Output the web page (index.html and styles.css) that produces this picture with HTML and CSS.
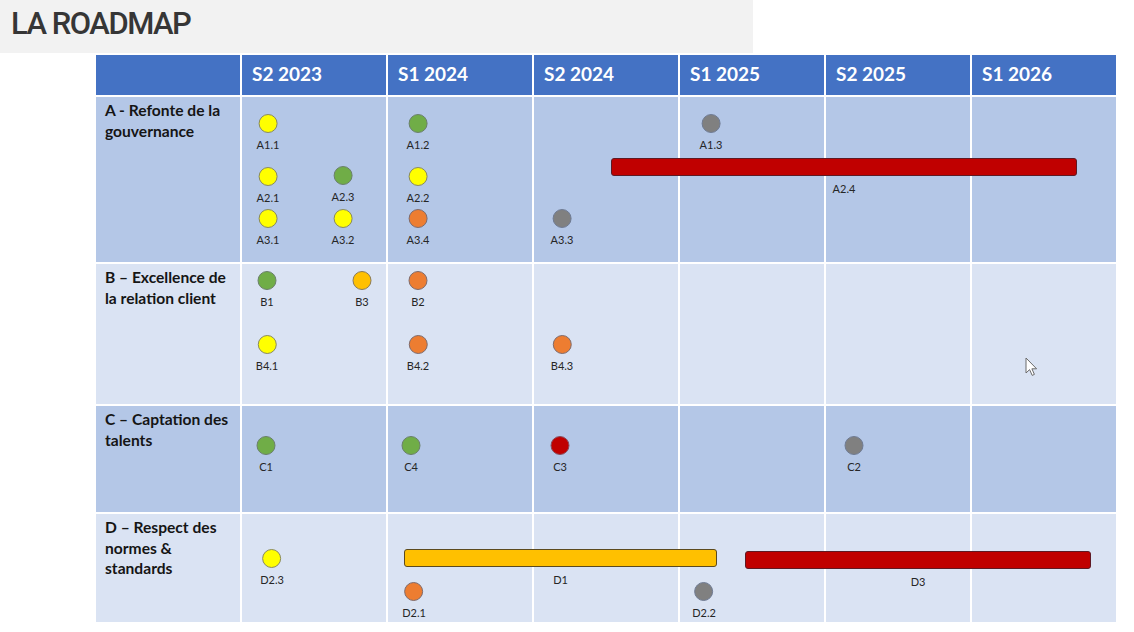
FILE: index.html
```html
<!DOCTYPE html>
<html lang="fr">
<head>
<meta charset="utf-8">
<title>La Roadmap</title>
<link rel="stylesheet" href="styles.css">
</head>
<body>
<header class="titlebar"><h1 class="title">LA ROADMAP</h1></header>

<div class="roadmap">
  <div class="hcell"></div>
  <div class="hcell">S2 2023</div>
  <div class="hcell">S1 2024</div>
  <div class="hcell">S2 2024</div>
  <div class="hcell">S1 2025</div>
  <div class="hcell">S2 2025</div>
  <div class="hcell">S1 2026</div>

  <!-- Row A -->
  <div class="label dark">A - Refonte de la gouvernance</div>
  <div class="track dark">
    <div class="cell"></div><div class="cell"></div><div class="cell"></div><div class="cell"></div><div class="cell"></div><div class="cell"></div>
    <div class="m" style="left:26px;top:27px"><i class="dot y"></i><span>A1.1</span></div>
    <div class="m" style="left:176px;top:27px"><i class="dot g"></i><span>A1.2</span></div>
    <div class="m" style="left:469px;top:27px"><i class="dot gr"></i><span>A1.3</span></div>
    <div class="m" style="left:26px;top:80px"><i class="dot y"></i><span>A2.1</span></div>
    <div class="m" style="left:101px;top:79px"><i class="dot g"></i><span>A2.3</span></div>
    <div class="m" style="left:176px;top:80px"><i class="dot y"></i><span>A2.2</span></div>
    <div class="m" style="left:26px;top:122px"><i class="dot y"></i><span>A3.1</span></div>
    <div class="m" style="left:101px;top:122px"><i class="dot y"></i><span>A3.2</span></div>
    <div class="m" style="left:176px;top:122px"><i class="dot o"></i><span>A3.4</span></div>
    <div class="m" style="left:320px;top:122px"><i class="dot gr"></i><span>A3.3</span></div>
    <div class="bar red" style="left:369px;top:61px;width:466px"><span>A2.4</span></div>
  </div>

  <!-- Row B -->
  <div class="label light">B – Excellence de la relation client</div>
  <div class="track light">
    <div class="cell"></div><div class="cell"></div><div class="cell"></div><div class="cell"></div><div class="cell"></div><div class="cell"></div>
    <div class="m" style="left:25px;top:17px"><i class="dot g"></i><span>B1</span></div>
    <div class="m" style="left:120px;top:17px"><i class="dot am"></i><span>B3</span></div>
    <div class="m" style="left:176px;top:17px"><i class="dot o"></i><span>B2</span></div>
    <div class="m" style="left:25px;top:81px"><i class="dot y"></i><span>B4.1</span></div>
    <div class="m" style="left:176px;top:81px"><i class="dot o"></i><span>B4.2</span></div>
    <div class="m" style="left:320px;top:81px"><i class="dot o"></i><span>B4.3</span></div>
  </div>

  <!-- Row C -->
  <div class="label dark">C – Captation des talents</div>
  <div class="track dark">
    <div class="cell"></div><div class="cell"></div><div class="cell"></div><div class="cell"></div><div class="cell"></div><div class="cell"></div>
    <div class="m" style="left:24px;top:40px"><i class="dot g"></i><span>C1</span></div>
    <div class="m" style="left:169px;top:40px"><i class="dot g"></i><span>C4</span></div>
    <div class="m" style="left:318px;top:40px"><i class="dot r"></i><span>C3</span></div>
    <div class="m" style="left:612px;top:40px"><i class="dot gr"></i><span>C2</span></div>
  </div>

  <!-- Row D -->
  <div class="label light">D – Respect des normes &amp; standards</div>
  <div class="track light">
    <div class="cell"></div><div class="cell"></div><div class="cell"></div><div class="cell"></div><div class="cell"></div><div class="cell"></div>
    <div class="m" style="left:30px;top:45px"><i class="dot y"></i><span>D2.3</span></div>
    <div class="bar amber" style="left:162px;top:35px;width:313px"><span>D1</span></div>
    <div class="bar red" style="left:503px;top:37px;width:346px"><span>D3</span></div>
    <div class="m" style="left:172px;top:78px"><i class="dot o"></i><span>D2.1</span></div>
    <div class="m" style="left:462px;top:78px"><i class="dot gr"></i><span>D2.2</span></div>
  </div>
</div>

<svg class="cursor" width="13" height="20" viewBox="0 0 13 20" aria-hidden="true">
  <path d="M1 1 L1 16 L4.6 12.6 L7.2 18.4 L9.4 17.4 L6.9 11.8 L11.6 11.8 Z" fill="#ffffff" stroke="#6a6a6a" stroke-width="1" stroke-linejoin="round"/>
</svg>
</body>
</html>
```

FILE: styles.css
```css
* { box-sizing: border-box; }

body {
  margin: 0;
  background: #ffffff;
  font-family: Lato, "Open Sans", sans-serif;
  position: relative;
  width: 1134px;
  height: 632px;
  overflow: hidden;
}

.titlebar {
  width: 753px;
  height: 53px;
  background: #f2f2f2;
  padding: 6px 0 0 11px;
}

.title {
  margin: 0;
  font-family: Roboto, "Liberation Sans", sans-serif;
  font-weight: 500;
  font-size: 31px;
  line-height: 36px;
  letter-spacing: -1.5px;
  color: #363636;
}

.roadmap {
  display: grid;
  grid-template-columns: repeat(7, 144px);
  grid-template-rows: 40px 165px 140px 106px 108px;
  gap: 2px;
  width: 1020px;
  margin: 2px 0 0 96px;
  background: #ffffff;
}

.hcell {
  background: #4472c4;
  color: #ffffff;
  font-weight: 700;
  font-size: 19px;
  display: flex;
  align-items: center;
  padding: 0 0 4px 10px;
}

.label {
  font-weight: 700;
  font-size: 15.6px;
  line-height: 20.5px;
  color: #151515;
  padding: 3px 8px 0 9px;
}

.label.dark { background: #b4c7e7; }
.label.light { background: #dae3f3; }

.track {
  grid-column: span 6;
  display: grid;
  grid-template-columns: repeat(6, 144px);
  gap: 2px;
  position: relative;
}

.track.dark .cell { background: #b4c7e7; }
.track.light .cell { background: #dae3f3; }

.m {
  position: absolute;
  transform: translate(-50%, -10px);
  display: flex;
  flex-direction: column;
  align-items: center;
  gap: 5px;
}

.m span,
.bar span {
  font-size: 11px;
  line-height: 13px;
  color: #262626;
  white-space: nowrap;
}

.dot {
  display: block;
  width: 19px;
  height: 19px;
  border-radius: 50%;
  border: 1px solid #7a7a7a;
}

.dot.y { background: #ffff00; border-color: #8a8a5a; }
.dot.g { background: #70ad47; border-color: #6a7f6a; }
.dot.o { background: #ed7d31; border-color: #7f6a6a; }
.dot.gr { background: #808080; border-color: #6f7b93; }
.dot.am { background: #ffc000; border-color: #8a7a55; }
.dot.r { background: #c00000; border-color: #8a4a5a; }

.bar {
  position: absolute;
  height: 18px;
  border-radius: 3px;
}

.bar.red { background: #c00000; border: 1px solid #5e1a24; }
.bar.amber { background: #ffc000; border: 1px solid #5c4a1e; }

.bar span {
  position: absolute;
  top: 23px;
  left: 0;
  right: 0;
  text-align: center;
}

.cursor {
  position: absolute;
  left: 1025px;
  top: 357px;
}
```
